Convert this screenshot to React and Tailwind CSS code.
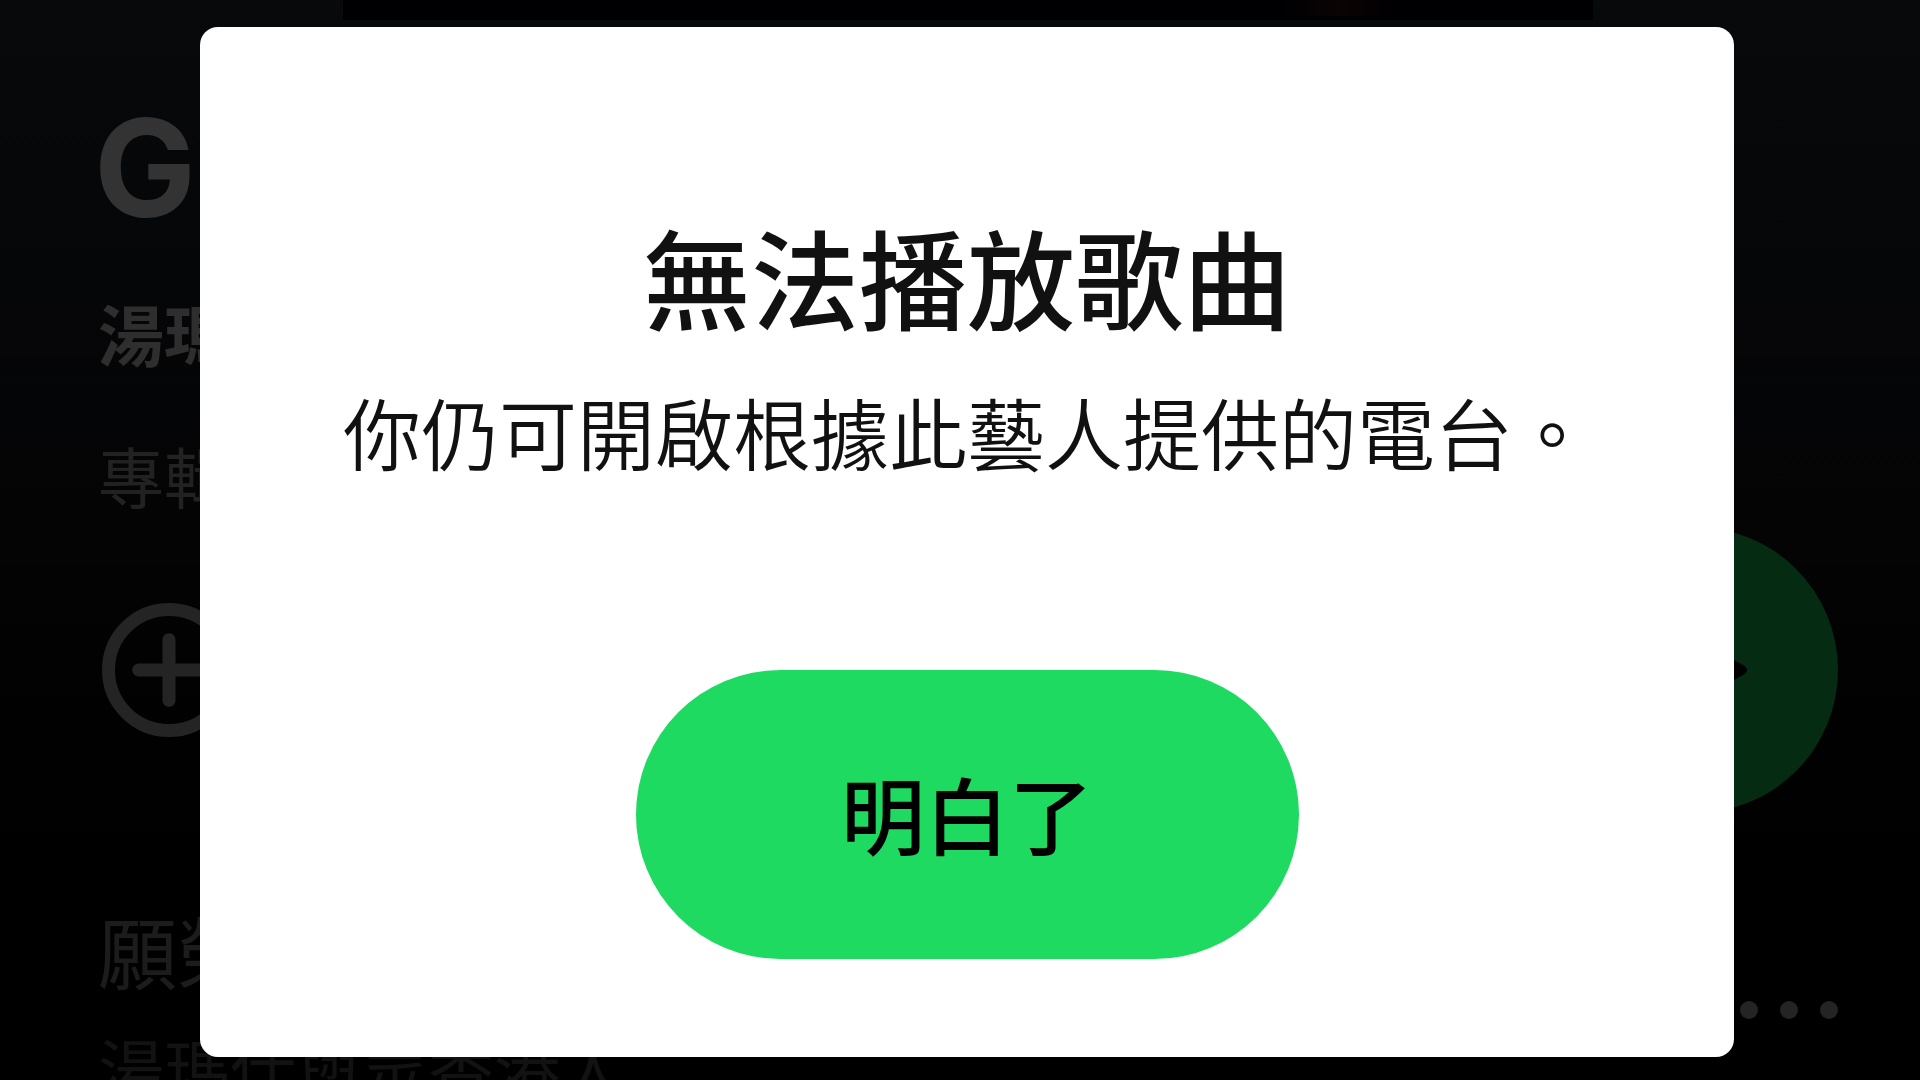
import { Plus } from 'lucide-react'

function AlbumPage() {
  return (
    <main className="flex h-full flex-col overflow-hidden bg-linear-to-b from-[#07090b] via-[#040405] via-50% to-black pr-[82px] pl-[98px] text-[66px]">
      <div className="mx-auto flex h-5 w-[1250px] shrink-0 justify-end bg-[#000002] pr-[200px]">
        {/* lights at the bottom of the cover */}
        <div className="h-4 w-[110px] bg-linear-to-r from-transparent via-[#0b0304] to-transparent" />
      </div>

      <h1 className="-ml-1 mt-[80px] h-[136px] shrink-0 font-['Inter','Noto_Sans_CJK_TC',sans-serif] text-[136px] leading-[136px] font-bold text-[#333333]">G</h1>
      <p className="mt-[48px] h-[96px] shrink-0 leading-[96px] font-bold text-[#2e2e2e]">湯瑪</p>
      <p className="mt-[46px] h-[96px] shrink-0 leading-[96px] text-[#222222]">專輯</p>

      <div className="mt-1 flex h-[288px] shrink-0 items-center justify-between">
        <button aria-label="加入" className="ml-1 flex size-[134px] items-center justify-center rounded-full border-[13px] border-[#242424] text-[#242424]">
          <Plus className="size-[104px] shrink-0" strokeWidth={3} />
        </button>
        <button aria-label="播放" className="flex size-[286px] items-center justify-center rounded-full bg-[#052b12]">
          <svg viewBox="0 0 120 132" className="h-[132px] w-[120px]">
            <path d="M6 5 L108 61 Q116 66 108 71 L6 127 Z" fill="#000" />
          </svg>
        </button>
      </div>

      <div className="mt-20 flex shrink-0 items-center justify-between">
        <div>
          <p className="h-[112px] text-[79px] leading-[112px] text-[#1c1c1c]">願榮</p>
          <p className="h-[120px] leading-[120px] text-[#121212]">湯瑪仕與眾香港人</p>
        </div>
        <button aria-label="更多" className="flex gap-[22px]">
          <span className="size-[18px] rounded-full bg-[#242424]" />
          <span className="size-[18px] rounded-full bg-[#242424]" />
          <span className="size-[18px] rounded-full bg-[#242424]" />
        </button>
      </div>
    </main>
  )
}

function Dialog() {
  return (
    <div className="fixed inset-0 flex pt-[27px] pr-[186px] pb-[23px] pl-[200px]">
      <div
        role="dialog"
        aria-labelledby="dialog-title"
        aria-describedby="dialog-text"
        className="flex grow flex-col items-center justify-end rounded-[18px] bg-white pb-[98px] text-center"
      >
        <h2 id="dialog-title" className="text-[108px] leading-[140px] font-medium text-[#111111]">無法播放歌曲</h2>
        <p id="dialog-text" className="mt-[30px] text-[78px] leading-[112px] font-[350] text-[#111111]">你仍可開啟根據此藝人提供的電台。</p>
        <button className="mt-[183px] h-[289px] w-[663px] rounded-full bg-[#1fda61] pb-1 text-[84px] font-medium text-black">
          明白了
        </button>
      </div>
    </div>
  )
}

export default function App() {
  return (
    <div className="h-screen bg-black font-['Noto_Sans_CJK_TC',sans-serif]" lang="zh-Hant">
      <AlbumPage />
      <Dialog />
    </div>
  )
}
